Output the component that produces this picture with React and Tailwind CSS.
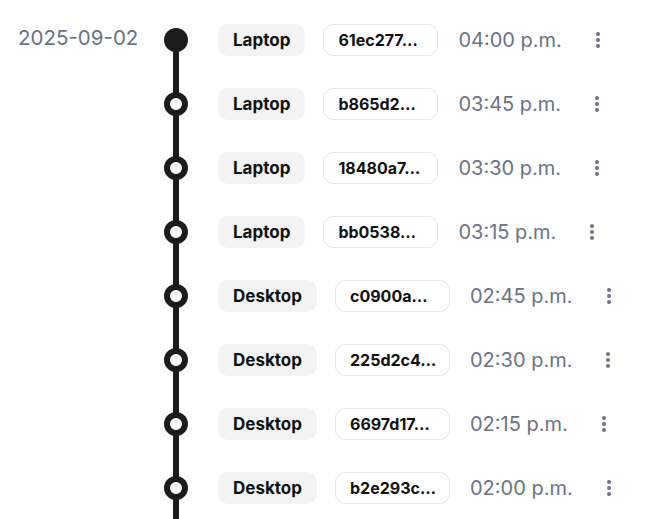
import React from "react";

const rows = [
  { device: "Laptop", hash: "61ec277…", time: "04:00 p.m." },
  { device: "Laptop", hash: "b865d2…", time: "03:45 p.m." },
  { device: "Laptop", hash: "18480a7…", time: "03:30 p.m." },
  { device: "Laptop", hash: "bb0538…", time: "03:15 p.m." },
  { device: "Desktop", hash: "c0900a…", time: "02:45 p.m." },
  { device: "Desktop", hash: "225d2c4…", time: "02:30 p.m." },
  { device: "Desktop", hash: "6697d17…", time: "02:15 p.m." },
  { device: "Desktop", hash: "b2e293c…", time: "02:00 p.m." },
];

function Dots() {
  return (
    <svg width="24" height="24" viewBox="0 0 24 24" className="text-gray-500">
      <circle cx="12" cy="6" r="2" fill="currentColor" />
      <circle cx="12" cy="12" r="2" fill="currentColor" />
      <circle cx="12" cy="18" r="2" fill="currentColor" />
    </svg>
  );
}

export default function App() {
  return (
    <div
      className="w-[656px] h-[519px] overflow-hidden bg-white pt-2"
      style={{ fontFamily: "Inter, 'Noto Sans', sans-serif" }}
    >
      {rows.map((r, i) => (
        <div key={i} className="flex h-16 items-center">
          <div className="w-[164px] pl-[18px] self-stretch flex items-center">
            {i === 0 && (
              <span className="text-[20.5px] leading-7 text-gray-500 -mt-1">2025-09-02</span>
            )}
          </div>
          <div className="relative w-6 self-stretch flex items-center justify-center">
            <div
              className={`absolute left-[9px] w-[6px] bg-[#1b1b1b] bottom-0 ${
                i === 0 ? "top-1/2" : "top-0"
              }`}
            />
            {i === 0 ? (
              <div className="relative w-6 h-6 rounded-full bg-[#1b1b1b]" />
            ) : (
              <div className="relative w-6 h-6 rounded-full bg-white border-[6px] border-[#1b1b1b]" />
            )}
          </div>
          <div className="flex items-center ml-[30px]">
            <span className="h-8 flex items-center pt-px px-[15px] rounded-[10px] bg-[#f3f3f3] text-[17px] leading-none font-bold text-[#111]">
              {r.device}
            </span>
            <span className="ml-[18px] h-8 w-[115px] flex items-center px-3.5 rounded-[10px] border border-gray-200 text-[16px] leading-none font-bold text-[#111] overflow-hidden whitespace-nowrap">
              {r.hash}
            </span>
            <span className="ml-5 text-[20px] leading-7 text-gray-500">{r.time}</span>
            <span className="ml-6 flex">
              <Dots />
            </span>
          </div>
        </div>
      ))}
    </div>
  );
}
